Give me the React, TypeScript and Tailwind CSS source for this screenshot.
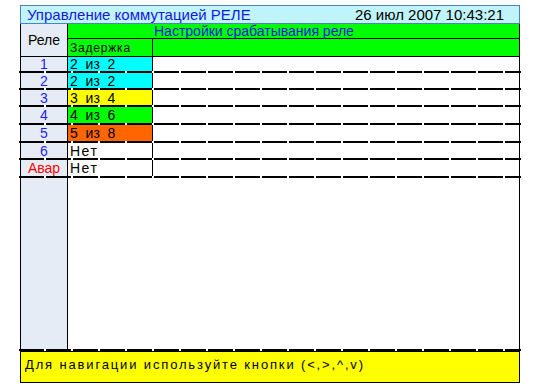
import React from "react";

type Row = {
  num: string;
  value: string;
  bg: string;
  numColor: string;
  h: string;
};

const rows: Row[] = [
  { num: "1", value: "2  из  2", bg: "bg-[#00ffff]", numColor: "text-[#1e1eff]", h: "h-[14px]" },
  { num: "2", value: "2  из  2", bg: "bg-[#00ffff]", numColor: "text-[#1e1eff]", h: "h-[15px]" },
  { num: "3", value: "3  из  4", bg: "bg-[#ffff00]", numColor: "text-[#1e1eff]", h: "h-[15px]" },
  { num: "4", value: "4  из  6", bg: "bg-[#00ff00]", numColor: "text-[#1e1eff]", h: "h-[16px]" },
  { num: "5", value: "5  из  8", bg: "bg-[#ff6600]", numColor: "text-[#1e1eff]", h: "h-[16px]" },
  { num: "6", value: "Нет", bg: "bg-white", numColor: "text-[#1e1eff]", h: "h-[15px]" },
  { num: "Авар", value: "Нет", bg: "bg-white", numColor: "text-[#ff0000]", h: "h-[16px]" },
];

// пунктирная линия-разделитель строк
function Dash() {
  return (
    <div className="-mx-[2px] h-[2px] bg-[repeating-linear-gradient(90deg,#000_0_25px,transparent_25px_27px)]" />
  );
}

export default function App() {
  return (
    <div className="h-[392px] w-[539px] bg-white font-['Liberation_Sans',Arial,sans-serif]">
      <div className="ml-[20px] w-[500px] pt-[5px]">
        {/* заголовок */}
        <div className="flex h-[19px] items-center justify-between border border-[#4f81bd] bg-[#bff4fb] pl-[6px] pr-[15px] leading-none">
          <span className="text-[15px] text-[#1818e0]">Управление коммутацией РЕЛЕ</span>
          <span className="text-[15px] text-black">26 июл 2007 10:43:21</span>
        </div>

        <div className="border-x border-black">
          {/* шапка таблицы */}
          <div className="flex h-[32px]">
            <div className="flex w-[47px] items-center justify-center border-r border-black bg-[#e6ecf6] text-[14px] text-black">
              Реле
            </div>
            <div className="flex flex-1 flex-col bg-[#00ff00]">
              <div className="flex h-[15px] items-center border-b border-black pl-[86px] text-[14px] leading-none text-[#1818e0]">
                Настройки срабатывания реле
              </div>
              <div className="flex flex-1">
                <div className="flex w-[85px] items-center border-r border-black pl-[2px] text-[12px] tracking-[0.8px] text-black">
                  Задержка
                </div>
              </div>
            </div>
          </div>
          <div className="h-[1px] bg-black" />

          {/* строки реле */}
          {rows.map((r) => (
            <div key={r.num}>
              <div className={`flex ${r.h}`}>
                <div
                  className={`flex w-[47px] items-center justify-center border-r border-black bg-[#e6ecf6] text-[14px] leading-none ${r.numColor}`}
                >
                  {r.num}
                </div>
                <div
                  className={`flex w-[85px] items-center whitespace-pre border-r border-black pl-[2px] text-[14px] leading-none text-black ${r.bg} ${
                    r.value === "Нет" ? "tracking-[1.5px]" : ""
                  }`}
                >
                  {r.value}
                </div>
                <div className="flex-1" />
              </div>
              <Dash />
            </div>
          ))}

          {/* пустая область */}
          <div className="flex h-[171px]">
            <div className="w-[47px] border-r border-black bg-[#e6ecf6]" />
            <div className="flex-1" />
          </div>
          <Dash />
        </div>

        {/* подсказка */}
        <div className="flex h-[32px] items-start border border-black bg-[#ffff00] pl-[4px] pt-[3px] text-[13px] tracking-[1.85px] text-black">
          Для навигации используйте кнопки (&lt;,&gt;,^,v)
        </div>
      </div>
    </div>
  );
}
